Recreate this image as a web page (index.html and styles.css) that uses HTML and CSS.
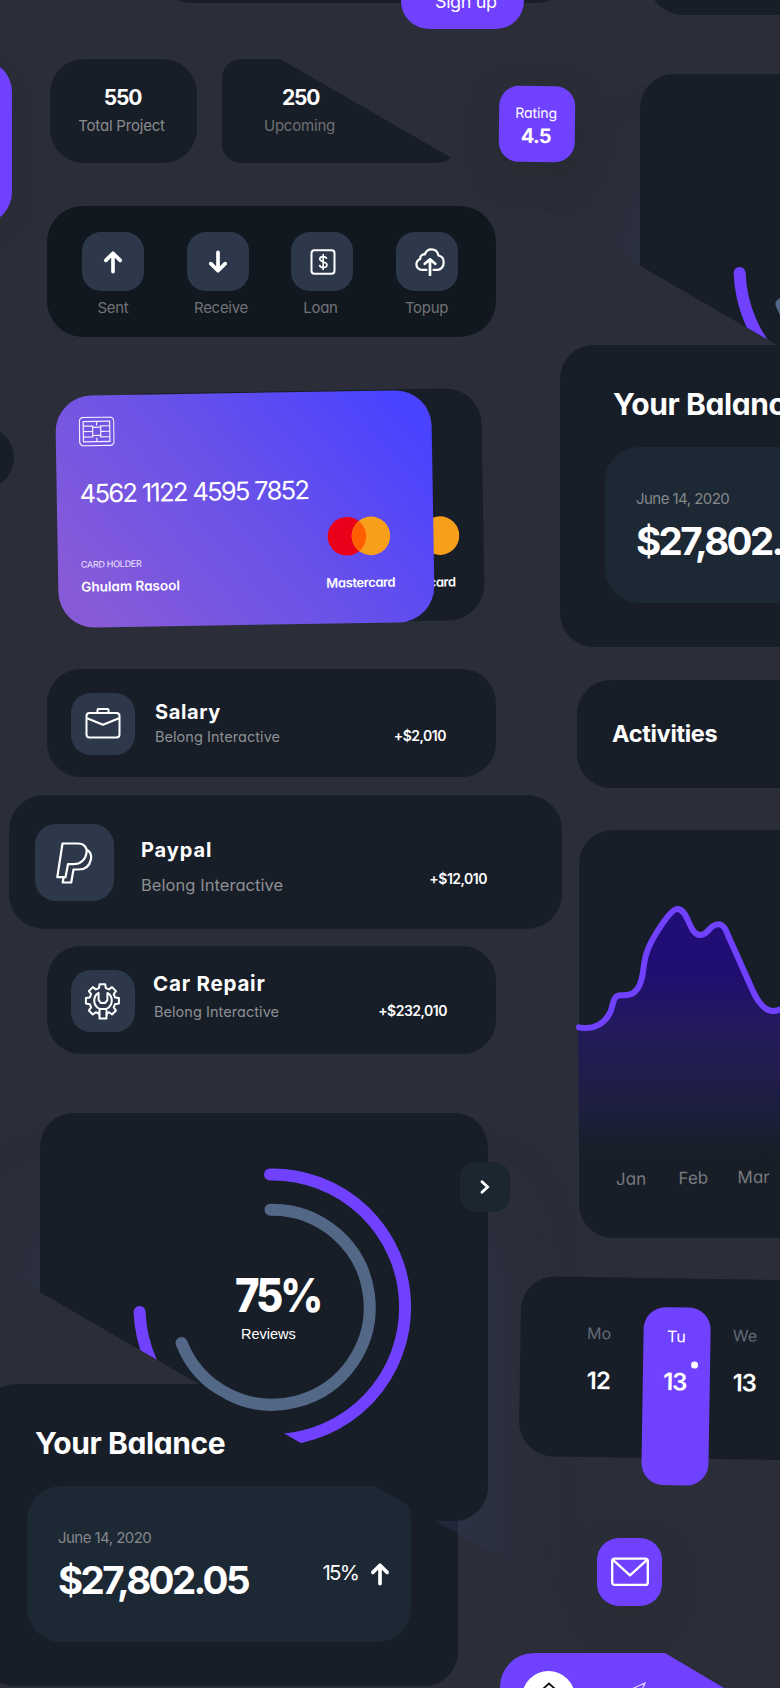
FILE: index.html
```html
<!DOCTYPE html>
<html lang="en">
<head>
<meta charset="utf-8">
<title>Finance UI board</title>
<link rel="stylesheet" href="styles.css">
</head>
<body>
<svg class="defs" width="0" height="0" aria-hidden="true">
  <defs>
    <symbol id="i-up" viewBox="0 0 24 26"><path d="M12 23.5V3.5M4.2 11.2L12 3.4l7.800 7.800" fill="none" stroke="#fff" stroke-width="4" stroke-linecap="round" stroke-linejoin="round"/></symbol>
    <symbol id="rings" viewBox="0 0 448 408">
      <path d="M230 61.400A132.800 132.800 0 1 1 99.600 199" fill="none" stroke="#7042ff" stroke-width="12" stroke-linecap="round"/>
      <path d="M230.500 96.700A97.500 97.500 0 1 1 141.500 230" fill="none" stroke="#536887" stroke-width="12" stroke-linecap="round"/>
    </symbol>
  </defs>
</svg>
<main class="board">
  <div class="edge edge-pill"></div>
  <div class="edge edge-right"></div>
  <div class="edge edge-purple"></div>
  <div class="edge edge-dot"></div>
  <a class="signup">Sign up</a>

  <section class="card stat stat-total"><b>550</b><span>Total Project</span></section>
  <section class="card stat stat-upcoming"><b>250</b><span>Upcoming</span></section>
  <section class="rating"><span>Rating</span><b>4.5</b></section>

  <section class="actions">
    <div class="action"><i class="tile"><svg width="22" height="26"><use href="#i-up"/></svg></i><span>Sent</span></div>
    <div class="action"><i class="tile"><svg class="flip" width="22" height="26"><use href="#i-up"/></svg></i><span class="receive">Receive</span></div>
    <div class="action"><i class="tile"><svg class="loan-icon" width="26" height="26" viewBox="0 0 26 26" fill="none" stroke="#fff" stroke-width="2"><rect x="1.500" y="1.300" width="23" height="23.400" rx="3"/><path d="M16.700 9.800c-.4-1.500-1.800-2.200-3.500-2.200-2 0-3.400 1-3.400 2.500 0 3.700 7.200 1.900 7.200 5.700 0 1.700-1.600 2.700-3.700 2.700s-3.500-1-3.800-2.700M13.200 5v16" stroke-width="1.600"/></svg></i><span class="loan">Loan</span></div>
    <div class="action"><i class="tile"><svg class="cloud" width="30" height="28" viewBox="0 0 30 28" fill="none" stroke="#fff" stroke-width="2.200" stroke-linecap="round" stroke-linejoin="round"><path d="M11.500 21.800H7.200C3.600 21.800 1.400 19.300 1.400 16.500c0-2.700 1.600-4.700 3.900-5.500C4.800 8.300 7.200 6 9.800 6.500 11 3.200 13.600 1.400 16.300 1.400c3.700 0 6.500 2.500 7.100 6.100 3.200.6 5.300 3.400 5.300 6.900 0 4.200-2.800 7.400-6.400 7.400h-3.800"/><path d="M15 27V12.500M9.800 15.800L15 11.300l5.200 4.500" stroke-width="2.700"/></svg></i><span class="topup">Topup</span></div>
  </section>

  <section class="pay-card pay-back">
    <div class="brand"><svg width="64" height="40" viewBox="0 0 64 40"><circle cx="20.500" cy="20" r="19.300" fill="#eb001b"/><circle cx="44.500" cy="20" r="19.300" fill="#f79e1b"/></svg><b>Mastercard</b></div>
  </section>
  <section class="pay-card pay-front">
    <svg class="chip" width="36" height="30" viewBox="0 0 36 30" fill="none" stroke="#f3eeff" stroke-width="1.200"><rect x=".8" y=".8" width="34.400" height="28.400" rx="4"/><rect x="4.600" y="4.900" width="26.500" height="20.300"/><rect x="14" y="10.800" width="8" height="8.200"/><path d="M18 4.900v4.100M18 25.200v-4M4.600 9.500H14v1.300M4.600 15H14M4.600 20.500H14V19M31.100 9.500H22v1.300M31.100 15H22M31.100 20.500H22V19"/></svg>
    <p class="number">4562 1122 4595 7852</p>
    <div class="pay-foot">
      <div class="holder"><small>CARD HOLDER</small><b>Ghulam Rasool</b></div>
      <div class="brand"><svg width="64" height="40" viewBox="0 0 64 40"><circle cx="20.500" cy="20" r="19.300" fill="#eb001b"/><circle cx="44.500" cy="20" r="19.300" fill="#f79e1b"/><path d="M32.500 4.900a19.300 19.300 0 0 1 0 30.200a19.300 19.300 0 0 1 0-30.200z" fill="#ff5f00"/></svg><b>Mastercard</b></div>
    </div>
  </section>

  <section class="card tx tx-salary">
    <i class="tile"><svg width="36" height="34" viewBox="0 0 36 34" fill="none" stroke="#fff" stroke-width="2" stroke-linejoin="round"><rect x="1.500" y="6" width="33" height="24.500" rx="3"/><path d="M12.500 6v-3q0-1 1-1h9q1 0 1 1v3M2 11.300l16 6.500 16-6.500"/></svg></i>
    <div class="tx-text"><b>Salary</b><span>Belong Interactive</span></div><em>+$2,010</em>
  </section>
  <section class="card tx tx-paypal">
    <i class="tile"><svg class="pp" width="38" height="44" viewBox="0 0 38 44" fill="none" stroke="#fff" stroke-width="2.200" stroke-linejoin="round"><path d="M7.500 2.500h15.500c6 0 9.500 4 8.500 9.500-1.100 7-6.200 11.200-13 11.200h-5.500l-2.500 13H2.300z"/><path d="M31.300 8.500c4 2 5.500 5.800 4.500 10.200-1.300 6.300-5.800 9.800-12.300 9.800h-5l-2.300 13H7.700l.9-5.300"/></svg></i>
    <div class="tx-text"><b>Paypal</b><span>Belong Interactive</span></div><em>+$12,010</em>
  </section>
  <section class="card tx tx-repair">
    <i class="tile"><svg width="38" height="38" viewBox="0 0 38 38" fill="none" stroke="#fff" stroke-width="2" stroke-linejoin="round"><path d="M15.500 33.500l-.5-2-3.200-1.300-3 2.300-4-4 2.300-3.100-1.300-3.200-3.900-.6v-5.600l3.900-.6 1.300-3.200-2.300-3.100 4-4 3.100 2.300 3.100-1.300.6-3.900h5.600l.6 3.900 3.100 1.300 3.100-2.300 4 4-2.300 3.100 1.300 3.200 3.900.6v5.600l-3.900.6-1.300 3.200 2.300 3.100-4 4-3-2.300L23 31.500l-.5 2"/><path d="M15.500 36.500V26.800a9 9 0 0 1-.9-15.900v7.300l2.300 2.800h4.200l2.300-2.800v-7.300a9 9 0 0 1-.9 15.900v9.700zM15.500 27h7"/></svg></i>
    <div class="tx-text"><b>Car Repair</b><span>Belong Interactive</span></div><em>+$232,010</em>
  </section>

  <section class="card balance balance-top">
    <h2>Your Balance</h2>
    <div class="balance-box">
      <div class="sum"><span>June 14, 2020</span><b>$27,802.05</b></div>
    </div>
  </section>
  <section class="card balance balance-bottom">
    <h2>Your Balance</h2>
    <div class="balance-box">
      <div class="sum"><span>June 14, 2020</span><b>$27,802.05</b></div>
      <div class="growth"><span>15%</span><svg width="22" height="26"><use href="#i-up"/></svg></div>
    </div>
  </section>

  <section class="reviews reviews-top"><div class="card reviews-face"><svg class="rings" width="448" height="408"><use href="#rings"/></svg></div></section>
  <section class="reviews reviews-bottom"><div class="card reviews-face"><svg class="rings" width="448" height="408"><use href="#rings"/></svg><div class="reviews-text"><b>75%</b><span>Reviews</span></div></div></section>
  <a class="next"><svg width="12" height="16" viewBox="0 0 12 16"><path d="M3 2.800L8.600 8 3 13.200" fill="none" stroke="#fff" stroke-width="2.800" stroke-linecap="round"/></svg></a>

  <section class="card activities"><h3>Activities</h3></section>
  <section class="card chart">
    <svg class="plot" width="220" height="440" viewBox="0 0 660 1320">
      <defs><linearGradient id="area" gradientUnits="userSpaceOnUse" x1="0" y1="290" x2="0" y2="1050"><stop offset="0" stop-color="#200d78"/><stop offset=".24" stop-color="#200d72"/><stop offset=".5" stop-color="#231b5a"/><stop offset=".7" stop-color="#201d48"/><stop offset=".85" stop-color="#1b1f38"/><stop offset="1" stop-color="#171e28" stop-opacity="0"/></linearGradient></defs>
      <path d="M54 652C100 660 135 642 152 604C160 580 160 557 180 556C210 556 220 554 234 534C254 504 246 470 260 428C272 390 330 297 352 297C386 297 386 375 421 375C445 375 448 343 475 343C495 343 500 368 512 394L575 535C590 570 610 603 640 603Q652 603 668 595V1050H57Z" fill="url(#area)"/>
      <path d="M57 652C100 660 135 642 152 604C160 580 160 557 180 556C210 556 220 554 234 534C254 504 246 470 260 428C272 390 330 297 352 297C386 297 386 375 421 375C445 375 448 343 475 343C495 343 500 368 512 394L575 535C590 570 610 603 640 603Q652 603 668 595" fill="none" stroke="#7042ff" stroke-width="18" stroke-linecap="round"/>
    </svg>
    <div class="months"><span>Jan</span><span>Feb</span><span>Mar</span></div>
  </section>

  <section class="card calendar">
    <div class="day"><span>Mo</span><b>12</b></div>
    <div class="day today"><span>Tu</span><b>13</b></div>
    <div class="day"><span>We</span><b>13</b></div>
  </section>

  <a class="mail"><svg width="38" height="30" viewBox="0 0 38 30" fill="none" stroke="#fff" stroke-width="2.300" stroke-linejoin="round"><rect x="1.200" y="1.700" width="35.600" height="26.200" rx="2.500"/><path d="M2 2.800l17 15.500 17-15.500"/></svg></a>

  <nav class="tabbar">
    <i class="home"><svg width="26" height="26" viewBox="0 0 26 26" fill="none" stroke="#111" stroke-width="1.800"><path d="M3 10.500L13 1.500l10 9V24H3z"/></svg></i>
    <svg class="send" width="24" height="24" viewBox="0 0 24 24" fill="none" stroke="#d9ccff" stroke-width="1.300"><path d="M22 1L2 10l7 4 4 8z"/></svg>
  </nav>
  <div class="corner"></div>
</main>
</body>
</html>
```
FILE: styles.css
```css
* { box-sizing: border-box; }
body { margin: 0; background: #2b2e38; color: #fff; font-family: Inter, "Liberation Sans", sans-serif; font-feature-settings: "cv11"; }
h2, h3, p { margin: 0; }
i, em { font-style: normal; }
svg { display: block; flex: none; }
.defs { position: absolute; }

/* free canvas that the component samples are scattered on */
.board { position: relative; width: 780px; height: 1688px; overflow: hidden; white-space: nowrap; }
.board > * { position: absolute; }
.card { background: #171e28; border-radius: 34px; }
.tile { display: flex; align-items: center; justify-content: center; background: #2d394a; }

.edge { background: #171e28; }
.edge-pill { left: 152px; top: -77px; width: 424px; height: 80px; border-radius: 40px; }
.edge-right { left: 648px; top: -60px; width: 200px; height: 75px; border-radius: 35px; }
.edge-purple { left: -80px; top: 60px; width: 92px; height: 164px; border-radius: 32px; background: #7042ff; box-shadow: 0 12px 26px rgba(38, 40, 48, .2); }
.edge-dot { left: -48px; top: 427px; width: 62px; height: 62px; border-radius: 50%; }
.signup { left: 401px; top: -41px; width: 123px; height: 70px; border-radius: 28px; background: #7042ff; padding: 31px 0 0 34px; font-size: 18px; line-height: 24px; letter-spacing: -.4px; }

.stat { top: 59px; height: 104px; display: flex; flex-direction: column; align-items: center; padding-top: 27px; gap: 7px; }
.stat b { font-size: 21px; line-height: 24px; letter-spacing: -1.200px; }
.stat span { font-size: 15px; line-height: 18px; letter-spacing: -.2px; color: #8b8b8e; }
.stat-total { left: 50px; width: 147px; padding-right: 4px; }
.stat-total b { margin-left: 2px; }
.stat-upcoming { left: 222px; width: 234px; border-radius: 19px; padding-right: 79px; clip-path: polygon(0 0, 58px 0, 228px 98px, 228px 104px, 0 104px); }
.stat-upcoming span { color: #6f6f72; }
.stat-upcoming b { margin-left: 2px; }

.rating { left: 499px; top: 86px; width: 76px; height: 76px; border-radius: 20px; background: #7042ff; transform: rotate(.7deg); display: flex; flex-direction: column; align-items: center; padding: 18px 2px 0 0; gap: 3px; box-shadow: 0 12px 32px rgba(36, 39, 46, .5); }
.rating span { font-size: 14px; line-height: 18px; letter-spacing: -.1px; }
.rating b { font-size: 20px; line-height: 22px; letter-spacing: -.8px; }

.actions { left: 47px; top: 206px; width: 449px; height: 131px; border-radius: 36px; background: #111820; display: flex; gap: 42.500px; padding: 26px 0 0 35px; }
.action { width: 62px; display: flex; flex-direction: column; align-items: center; gap: 8px; }
.action .tile { width: 62px; height: 59px; border-radius: 19px; }
.action span { font-size: 15px; line-height: 18px; letter-spacing: -.3px; color: #727376; }
.flip { transform: scaleY(-1); }
.loan-icon { margin-left: 2px; }
.cloud { margin-left: 6px; }
.receive { margin-left: 7px; }
.loan { margin-right: 3px; }

.pay-card { width: 376px; height: 232px; border-radius: 36px; transform: rotate(-.95deg); }
.pay-front { left: 56.500px; top: 392.500px; background: linear-gradient(50deg, #875bd8 8%, #6a52e8 50%, #4942ff 92%); padding: 21px 39px 0 23px; }
.pay-back { left: 107px; top: 391px; background: #171e28; padding: 127px 24px 0 0; display: flex; justify-content: flex-end; }
.number { margin-top: 32px; font-size: 25.500px; line-height: 30px; letter-spacing: -1.700px; }
.pay-foot { display: flex; justify-content: space-between; align-items: flex-start; margin-top: 12px; }
.holder { display: flex; flex-direction: column; padding-top: 38px; }
.holder small { font-size: 9px; line-height: 12px; letter-spacing: -.3px; color: #efe8ff; }
.holder b { font-size: 13.500px; line-height: 18px; margin-top: 7px; font-weight: 600; }
.brand { display: flex; flex-direction: column; align-items: center; gap: 17px; }
.brand b { font-size: 13px; line-height: 18px; font-weight: 600; letter-spacing: -.4px; }
.pay-front .brand svg { margin-right: 3px; }
.pay-back .brand svg { margin-left: 14px; }

.tx { display: flex; }
.tx .tile { width: 64px; height: 62px; border-radius: 20px; flex: none; }
.tx-text { display: flex; flex-direction: column; }
.tx-text b { font-size: 20px; line-height: 24px; letter-spacing: .6px; font-feature-settings: normal; }
.tx-text span { font-size: 14.500px; line-height: 18px; letter-spacing: .05px; color: #8e8f92; }
.tx em { font-size: 14px; line-height: 18px; font-weight: 600; letter-spacing: -.5px; margin-left: auto; }
.tx-salary { left: 47px; top: 669px; width: 449px; height: 108px; padding: 24px 50px 0 24px; }
.tx-salary .tx-text { margin-left: 20px; padding-top: 7px; gap: 4px; }
.tx-salary em { margin-top: 34px; }
.tx-paypal { left: 10px; top: 796px; width: 551px; height: 132px; padding: 28px 74px 0 25px; box-shadow: 0 0 0 1px #16222d; }
.tx-paypal .tile { width: 79px; height: 77px; border-radius: 21px; }
.pp { margin-right: 2px; }
.tx-paypal .tx-text { margin-left: 27px; padding-top: 14px; gap: 13px; }
.tx-paypal .tx-text b { letter-spacing: .9px; }
.tx-paypal .tx-text span { font-size: 16.500px; line-height: 20px; }
.tx-paypal em { margin-top: 46px; }
.tx-repair { left: 47px; top: 946px; width: 449px; height: 108px; padding: 24px 49px 0 24px; }
.tx-repair .tx-text { margin-left: 18px; padding-top: 2px; gap: 7px; }
.tx-repair .tx-text b { font-size: 20.500px; letter-spacing: .8px; }
.tx-repair .tx-text span { margin-left: 1px; }
.tx-repair em { margin-top: 32px; }

.balance { width: 476px; height: 302px; padding: 44px 0 0 45px; }
.balance-top { left: 560px; top: 345px; }
.balance-bottom { left: -18px; top: 1384px; }
.balance h2 { font-size: 30px; line-height: 30px; letter-spacing: -.4px; margin-left: 8px; }
.balance-box { margin-top: 28px; width: 384px; height: 156px; border-radius: 34px; background: #1d2835; display: flex; justify-content: space-between; padding: 42px 20px 0 31px; }
.sum { display: flex; flex-direction: column; }
.sum span { font-size: 15px; line-height: 20px; letter-spacing: -.55px; color: #85878a; }
.sum b { font-size: 38.500px; line-height: 44px; letter-spacing: -2.650px; margin-top: 10px; }
.growth { display: flex; gap: 11px; padding-top: 33px; }
.growth span { font-size: 20.500px; line-height: 24px; letter-spacing: -1.800px; }

/* glow and card are cut along the same 30 degree diagonal */
.reviews { width: 448px; height: 408px; clip-path: polygon(-120px -100px, 620px -100px, 620px 537.500px, -120px 109.900px); }
.reviews-top { left: 640px; top: 74px; clip-path: polygon(-120px -100px, 620px -100px, 620px 550px, -120px 122.500px); }
.reviews-bottom { left: 40px; top: 1113px; }
.reviews-face { position: relative; width: 448px; height: 408px; box-shadow: 0 100px 80px 0 rgba(48, 56, 88, .5); }
.reviews-text { position: absolute; left: 195px; top: 158px; display: flex; flex-direction: column; }
.reviews-text b { font-size: 47px; line-height: 48px; font-weight: 800; letter-spacing: -3.500px; transform: scaleX(.89); transform-origin: 0 50%; }
.reviews-text span { font: 14.500px/18px "Liberation Sans", sans-serif; margin: 6px 0 0 6px; }
.next { left: 460px; top: 1162px; width: 50px; height: 50px; border-radius: 16px; background: #1b2631; display: flex; align-items: center; justify-content: center; }

.activities { left: 577px; top: 680px; width: 260px; height: 108px; padding: 38px 0 0 35px; }
.activities h3 { font-size: 23.500px; line-height: 32px; font-weight: 700; letter-spacing: -.3px; }
.chart { left: 579px; top: 830px; width: 260px; height: 408px; }
.plot { margin: -20px 0 0 -19px; }
.months { display: grid; grid-template-columns: 62.500px 59px 40px; margin: -81px 0 0 37px; font-size: 17px; line-height: 20px; color: #77787b; transform: rotate(-.8deg); transform-origin: 0 50%; }

.calendar { left: 520px; top: 1278.500px; width: 400px; height: 180px; transform: rotate(.9deg); display: flex; padding: 29px 0 0 56px; }
.day { width: 45px; display: flex; flex-direction: column; align-items: center; gap: 24px; padding-top: 17px; }
.day span { font-size: 16px; line-height: 20px; color: #646a76; }
.day b { font-size: 24px; line-height: 28px; font-weight: 600; letter-spacing: -1px; }
.today { position: relative; width: 67px; height: 178px; margin: 0 12px 0 22px; padding: 19px 3px 0 0; gap: 22px; border-radius: 22px; background: #7042ff; }
.today span { color: #fff; margin-left: 2px; }
.today::after { content: ""; position: absolute; left: 48px; top: 54px; width: 7px; height: 7px; border-radius: 50%; background: #fff; }

.mail { left: 597px; top: 1538px; width: 65px; height: 68px; border-radius: 22px; background: #7042ff; display: flex; align-items: center; justify-content: center; box-shadow: 0 14px 36px rgba(38, 41, 48, .4); }
.tabbar { left: 500px; top: 1653px; width: 300px; height: 90px; border-radius: 34px; background: #7042ff; clip-path: polygon(0 0, 165px 0, 300px 80px, 300px 90px, 0 90px); display: flex; padding: 18px 0 0 22px; }
.home { width: 53px; height: 53px; border-radius: 50%; background: #fff; display: flex; justify-content: center; padding-top: 11px; }
.send { margin: 11px 0 0 48px; }
.corner { left: 775px; top: 1680px; width: 50px; height: 50px; border-radius: 25px; background: #fff; }
```
